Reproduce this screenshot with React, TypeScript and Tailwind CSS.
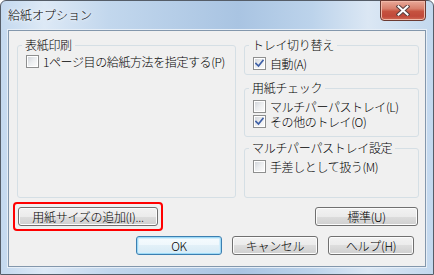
import React from "react";

const font = { fontFamily: '"Noto Sans CJK JP", "Noto Sans", sans-serif' };

function Check({ checked }: { checked?: boolean }) {
  return (
    <span className="relative flex h-[13px] w-[13px] shrink-0 items-center justify-center border border-[#8e8f8f] bg-white">
      <span className="h-[9px] w-[9px] bg-[linear-gradient(135deg,#d3d6db_0%,#eceef0_50%,#fafafa_100%)]" />
      {checked && (
        <svg className="absolute left-[1px] top-[1px]" width="9" height="9" viewBox="0 0 9 9">
          <path d="M1 4.5 L3.5 7 L8 1.5" fill="none" stroke="#3e5fa6" strokeWidth="1.7" strokeLinecap="square" />
        </svg>
      )}
    </span>
  );
}

function Row({ checked, label }: { checked?: boolean; label: string }) {
  return (
    <div className="flex h-[15px] items-center gap-[4px]">
      <Check checked={checked} />
      <span className="text-[12px] font-light leading-[14px] tracking-[-0.4px] text-black whitespace-nowrap">{label}</span>
    </div>
  );
}

function Group({
  title,
  className,
  children,
}: {
  title: string;
  className: string;
  children: React.ReactNode;
}) {
  return (
    <fieldset className={"rounded-[3px] border border-[#d5dfe5] " + className}>
      <legend className="ml-[4px] px-[3px] text-[12px] font-light leading-[14px] tracking-[-0.3px] text-black whitespace-nowrap">
        {title}
      </legend>
      {children}
    </fieldset>
  );
}

function Btn({ label, w, def }: { label: string; w: string; def?: boolean }) {
  return (
    <div
      className={
        "flex h-[19px] items-center justify-center rounded-[3px] border text-[12px] font-light leading-[14px] tracking-[-0.3px] text-black " +
        w +
        (def
          ? " border-[#3c7fb1] bg-[linear-gradient(to_bottom,#f6fbfe_0%,#eef7fc_50%,#e2f0f8_50%,#d6eaf5_100%)] shadow-[inset_0_0_0_1px_#9fdaf6,inset_0_0_0_2px_#d4eefb]"
          : " border-[#707070] bg-[linear-gradient(to_bottom,#f2f2f2_0%,#ebebeb_50%,#dddddd_50%,#cfcfcf_100%)] shadow-[inset_0_0_0_1px_#fcfcfc]")
      }
    >
      {label}
    </div>
  );
}

export default function App() {
  return (
    <div className="h-[275px] w-[434px] overflow-hidden bg-white" style={font}>
      <div className="flex h-full w-full flex-col rounded-t-[6px] border border-[#555d68] bg-[linear-gradient(to_right,#c4d9ef_0%,#dde9f6_10%,#c2d7ed_25%,#a9c4e2_55%,#bcd3eb_72%,#dbe7f4_85%,#c3d8ee_100%)] px-[7px] pb-[7px]">
        <div className="flex h-[29px] items-start">
          <span className="pt-[7px] text-[12px] font-light leading-[14px] text-black [text-shadow:0_0_6px_#ffffff,0_0_3px_#ffffff]">
            給紙オプション
          </span>
          <div className="-mt-[1px] ml-auto flex h-[21px] w-[46px] items-center justify-center rounded-b-[4px] border border-[#6b3a32] bg-[linear-gradient(to_bottom,#e9a999_0%,#d8806d_40%,#c6523f_55%,#c0493a_80%,#d06a55_100%)] shadow-[inset_0_0_0_1px_#f0b8a8]">
            <svg width="14" height="11" viewBox="0 0 14 11">
              <path d="M2.5 1.5 L11.5 9.5 M11.5 1.5 L2.5 9.5" stroke="#5a4040" strokeWidth="4" strokeLinecap="square" />
              <path d="M2.5 1.5 L11.5 9.5 M11.5 1.5 L2.5 9.5" stroke="#ffffff" strokeWidth="2" strokeLinecap="square" />
            </svg>
          </div>
        </div>
        <div className="flex flex-1 flex-col border border-[#8397ac] bg-[#f0f0f0] shadow-[0_0_0_1px_#e6eef7]">
          <div className="flex gap-[8px] pl-[8px] pr-[6px] pt-[7px]">
            <Group title="表紙印刷" className="h-[160px] w-[219px]">
              <div className="pl-[8px] pt-[2px]">
                <Row label="1ページ目の給紙方法を指定する(P)" />
              </div>
            </Group>
            <div className="flex w-[175px] flex-col">
              <Group title="トレイ切り替え" className="h-[37px]">
                <div className="pl-[8px] pt-[4px]">
                  <Row checked label="自動(A)" />
                </div>
              </Group>
              <Group title="用紙チェック" className="mt-[6px] h-[56px]">
                <div className="pl-[8px] pt-[4px]">
                  <Row label="マルチパーパストレイ(L)" />
                  <Row checked label="その他のトレイ(O)" />
                </div>
              </Group>
              <Group title="マルチパーパストレイ設定" className="mt-[4px] h-[57px]">
                <div className="pl-[8px] pt-[4px]">
                  <Row label="手差しとして扱う(M)" />
                </div>
              </Group>
            </div>
          </div>
          <div className="mt-[4px] flex items-center justify-between pl-[4px] pr-[7px]">
            <div className="rounded-[4px] border-2 border-[#ff0000] p-[3px]">
              <Btn label="用紙サイズの追加(I)..." w="w-[140px]" />
            </div>
            <Btn label="標準(U)" w="w-[103px]" />
          </div>
          <div className="mt-[5px] flex justify-end gap-[10px] pr-[11px]">
            <Btn label="OK" w="w-[86px]" def />
            <Btn label="キャンセル" w="w-[86px]" />
            <Btn label="ヘルプ(H)" w="w-[86px]" />
          </div>
        </div>
      </div>
    </div>
  );
}
